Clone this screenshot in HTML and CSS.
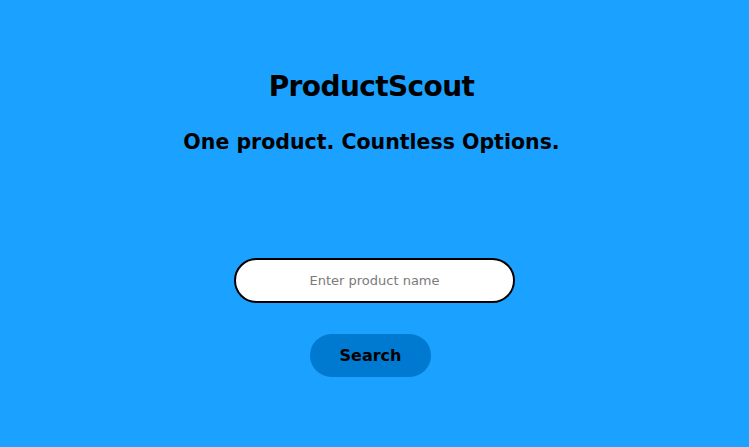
FILE: index.html
```html
<!DOCTYPE html>
<html>
<head>
<meta charset="utf-8">
<link rel="stylesheet" href="styles.css">
</head>
<body>
<main class="page">
  <h1 class="title">ProductScout</h1>
  <h2 class="tagline">One product. Countless Options.</h2>
  <form class="search">
    <input class="search-input" type="text" placeholder="Enter product name">
    <button class="search-button" type="button">Search</button>
  </form>
</main>
</body>
</html>
```
FILE: styles.css
```css
html, body {
  margin: 0;
  padding: 0;
  height: 100%;
}
body {
  background: #1ba1ff;
  font-family: "DejaVu Sans", "Liberation Sans", sans-serif;
  color: #000;
}
.page {
  display: flex;
  flex-direction: column;
  align-items: center;
  padding-top: 68px;
}
.title {
  margin: 0 6px 0 0;
  font-size: 28px;
  line-height: 38px;
  font-weight: bold;
  letter-spacing: -0.6px;
}
.tagline {
  margin: 22px 6px 0 0;
  font-size: 20.5px;
  line-height: 28px;
  font-weight: bold;
}
.search {
  display: flex;
  flex-direction: column;
  align-items: center;
  margin-top: 102px;
}
.search-input {
  box-sizing: border-box;
  width: 281px;
  height: 45px;
  border: 2px solid #000;
  border-radius: 23px;
  background: #fff;
  text-align: center;
  font-family: "DejaVu Sans", sans-serif;
  font-size: 13px;
  outline: none;
}
.search-input::placeholder {
  color: #7a7a7a;
}
.search-button {
  margin-top: 31px;
  margin-right: 8px;
  width: 121px;
  height: 43px;
  border: none;
  border-radius: 22px;
  background: #0079d0;
  font-family: "DejaVu Sans", sans-serif;
  font-size: 16px;
  font-weight: bold;
  color: #000;
  cursor: pointer;
}
```
